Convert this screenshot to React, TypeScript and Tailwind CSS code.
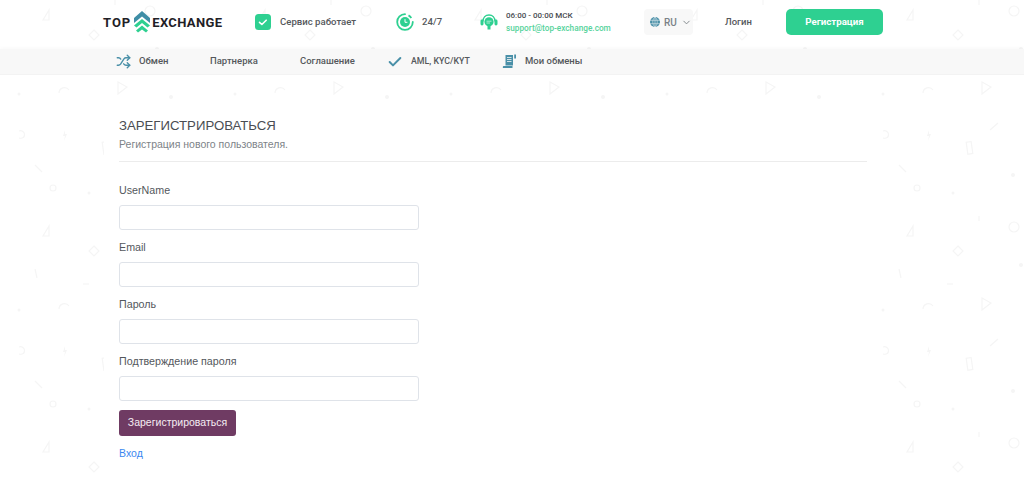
import React from "react";
import { Shuffle, Check, ChevronDown } from "lucide-react";

function Pattern() {
  return (
    <svg className="absolute inset-0 h-full w-full" aria-hidden="true">
      <defs>
        <pattern id="bg" x="880" y="80" width="216" height="216" patternUnits="userSpaceOnUse">
          <g fill="none" stroke="#f5f5f5" strokeWidth="1.200">
            <path d="M43 13a5.500 5.500 0 0 1 10-3" />
            <path d="M102 14V2l9 5z" />
            <path d="M3 58c4 1 5.500-1 5.500-3.500S6 50 3 51" />
            <path d="M118 43l-8 7" />
            <rect x="87" y="62" width="5" height="12" transform="rotate(-8 89 68)" />
            <path d="M19 85l7 7" />
            <circle cx="37" cy="108" r="3" />
            <path d="M99 136v5" />
            <circle cx="134" cy="147" r="5" />
            <path d="M33 146l-6 10h6z" />
            <path d="M78 166l5 5-5 5-5-5z" />
            <path d="M19 189l2 9" />
            <path d="M67 204h6" />
          </g>
          <g fill="#f5f5f5">
            <circle cx="3" cy="14" r="1.500" />
            <circle cx="155" cy="17" r="2" />
            <circle cx="133" cy="95" r="2" />
            <circle cx="73" cy="113" r="1.500" />
            <circle cx="141" cy="185" r="2" />
            <path d="M49 50l-2 6h2l-1 5 3-7h-2z" />
          </g>
        </pattern>
      </defs>
      <rect width="100%" height="100%" fill="url(#bg)" />
    </svg>
  );
}

function Logo() {
  return (
    <div className="flex items-center font-['Roboto',sans-serif] text-[13px] leading-none font-bold text-[#1f2126]">
      <span className="tracking-[1px]">TOP</span>
      <svg width="18" height="22" viewBox="0 0 18 22" className="mx-[1.500px] shrink-0">
        <path d="M9 0l8 7v5L9 5.500 1 12V7z" fill="#3f8ea6" />
        <path d="M9 8l8 6.500-2.500 2L9 12l-5.500 4.500L1 14.500z" fill="#2ed091" />
        <path d="M9 14.500l6 5-2 2-4-3-4 3-2-2z" fill="#2ed091" />
      </svg>
      <span className="tracking-[0.350px]">EXCHANGE</span>
    </div>
  );
}

function CheckBadge() {
  return (
    <svg width="16" height="16" viewBox="0 0 16 16" className="shrink-0">
      <rect width="16" height="16" rx="3.500" fill="#2ed091" />
      <path d="M4.500 8.300l2.400 2.200 4.300-4.300" fill="none" stroke="#fff" strokeWidth="1.600" strokeLinecap="round" strokeLinejoin="round" />
    </svg>
  );
}

function ClockIcon() {
  return (
    <svg width="18" height="18" viewBox="0 0 18 18" className="shrink-0">
      <path d="M9 1.200A7.800 7.800 0 1 0 16.800 9" fill="none" stroke="#2ed091" strokeWidth="1.800" strokeLinecap="round" />
      <circle cx="9" cy="9" r="5" fill="#2ed091" />
      <path d="M9 6.200V9.300h2.400" fill="none" stroke="#fff" strokeWidth="1" />
      <path d="M12.500 2.400a7.800 7.800 0 0 1 2.800 2.600" fill="none" stroke="#2ed091" strokeWidth="1.800" />
    </svg>
  );
}

function HeadsetIcon() {
  return (
    <svg width="18" height="17" viewBox="0 0 18 17" className="shrink-0">
      <path d="M3 7.500C3 3.500 5.500 1 9 1s6 2.500 6 6.500" fill="none" stroke="#2ed091" strokeWidth="1.400" />
      <rect x="0.500" y="5.500" width="3" height="6" rx="1.400" fill="#2ed091" />
      <rect x="14.500" y="5.500" width="3" height="6" rx="1.400" fill="#2ed091" />
      <circle cx="9" cy="7.800" r="4.600" fill="#2ed091" />
      <path d="M6.500 7.200h5M6.500 9h3.500" stroke="#fff" strokeWidth="0.600" />
      <path d="M7.500 12h3v3.500h-3z" fill="#2ed091" />
    </svg>
  );
}

function GlobeIcon() {
  return (
    <svg width="10" height="10" viewBox="0 0 10 10" className="shrink-0">
      <circle cx="5" cy="5" r="5" fill="#4a90a8" />
      <path d="M0 3.300h10M0 6.700h10M5 0v10M5 0C2 2.500 2 7.500 5 10M5 0c3 2.500 3 7.500 0 10" fill="none" stroke="#f8f8f8" strokeWidth="0.500" />
    </svg>
  );
}

function DocIcon() {
  return (
    <svg width="15" height="15" viewBox="0 0 15 15" className="shrink-0">
      <path d="M3.500 1h7.500v10.500H3.500z" fill="#4a90a8" />
      <path d="M5 3.500h4.500M5 5.500h4.500M5 7.500h4.500" stroke="#f8f8f8" strokeWidth="0.800" />
      <path d="M12.200 0.500h1.800v4h-1.800z" fill="#4a90a8" />
      <path d="M1 14c-.500-1 0-2 1-2h8.500v2z" fill="#4a90a8" />
    </svg>
  );
}

function Field({ label }: { label: string }) {
  return (
    <div className="flex flex-col">
      <label className="mb-[7px] h-[15px] text-[10.700px] leading-[15px] text-[#53575c]">{label}</label>
      <input className="h-[25px] w-[300px] rounded-[3px] border border-[#dfe3e9] bg-white" />
    </div>
  );
}

export default function App() {
  return (
    <div className="relative h-[477px] w-full overflow-hidden bg-white font-['Liberation_Sans',Arial,sans-serif]">
      <Pattern />
      <div className="relative flex h-[49px] items-center pb-[5px] font-['Roboto',sans-serif]">
        <div className="ml-[103px] w-[152px]">
          <Logo />
        </div>
        <div className="flex w-[141px] items-center gap-[9px]">
          <CheckBadge />
          <span className="text-[9.600px] font-medium whitespace-nowrap text-[#55585c]">Сервис работает</span>
        </div>
        <div className="flex w-[84px] items-center gap-[8px]">
          <ClockIcon />
          <span className="text-[9.600px] font-medium text-[#55585c]">24/7</span>
        </div>
        <div className="flex w-[164px] items-center gap-[8px]">
          <HeadsetIcon />
          <div className="flex flex-col gap-[2px] leading-[11px] whitespace-nowrap">
            <span className="text-[8px] font-medium text-[#4a4d52]">06:00 - 00:00 МСК</span>
            <span className="text-[8.250px] font-medium text-[#57d39c]">support@top-exchange.com</span>
          </div>
        </div>
        <div className="flex h-[26px] w-[49px] items-center gap-[4px] rounded-[4px] bg-[#f8f8f8] pl-[6px]">
          <GlobeIcon />
          <span className="text-[10px] font-medium text-[#7b8287]">RU</span>
          <ChevronDown size={11} className="text-[#7b8287]" />
        </div>
        <span className="ml-[32px] text-[9.500px] font-medium text-[#55585c]">Логин</span>
        <button className="ml-[34px] h-[26px] w-[97px] rounded-[5px] bg-[#2ed091] text-[9.700px] font-bold text-white">Регистрация</button>
      </div>
      <nav className="relative flex h-[26px] items-center border-b border-[#f3f3f3] bg-[#f8f8f8] pl-[116px] font-['Roboto',sans-serif] text-[9.500px] font-medium whitespace-nowrap text-[#55585c] shadow-[0_-2px_3px_rgba(0,0,0,0.02)]">
        <Shuffle size={15} strokeWidth={2.200} className="mr-[8px] text-[#4a90a8]" />
        <span className="w-[71px]">Обмен</span>
        <span className="w-[90px]">Партнерка</span>
        <span className="w-[87px]">Соглашение</span>
        <Check size={16} strokeWidth={3} className="mr-[8px] text-[#4a90a8]" />
        <span className="w-[91px] text-[8.800px]">AML, KYC/KYT</span>
        <DocIcon />
        <span className="ml-[8px]">Мои обмены</span>
      </nav>
      <main className="relative mt-[25px] ml-[104px] h-[400px] w-[776px] bg-white pt-[16px] pl-[15px]">
        <div className="w-[748px]">
          <h1 className="text-[13.200px] leading-[20px] text-[#4a4d52]">ЗАРЕГИСТРИРОВАТЬСЯ</h1>
          <p className="text-[10.500px] leading-[17px] text-[#7d8388]">Регистрация нового пользователя.</p>
          <hr className="mt-[8px] border-[#ececec]" />
          <div className="mt-[21px] flex flex-col gap-[10px]">
            <Field label="UserName" />
            <Field label="Email" />
            <Field label="Пароль" />
            <Field label="Подтверждение пароля" />
          </div>
          <button className="mt-[9px] h-[26px] w-[117px] rounded-[3px] bg-[#6f3b63] text-[10.500px] text-[#f4edf2]">Зарегистрироваться</button>
          <div className="mt-[7px] leading-[17px]">
            <a className="text-[10.500px] text-[#3b87f0]">Вход</a>
          </div>
        </div>
      </main>
    </div>
  );
}
